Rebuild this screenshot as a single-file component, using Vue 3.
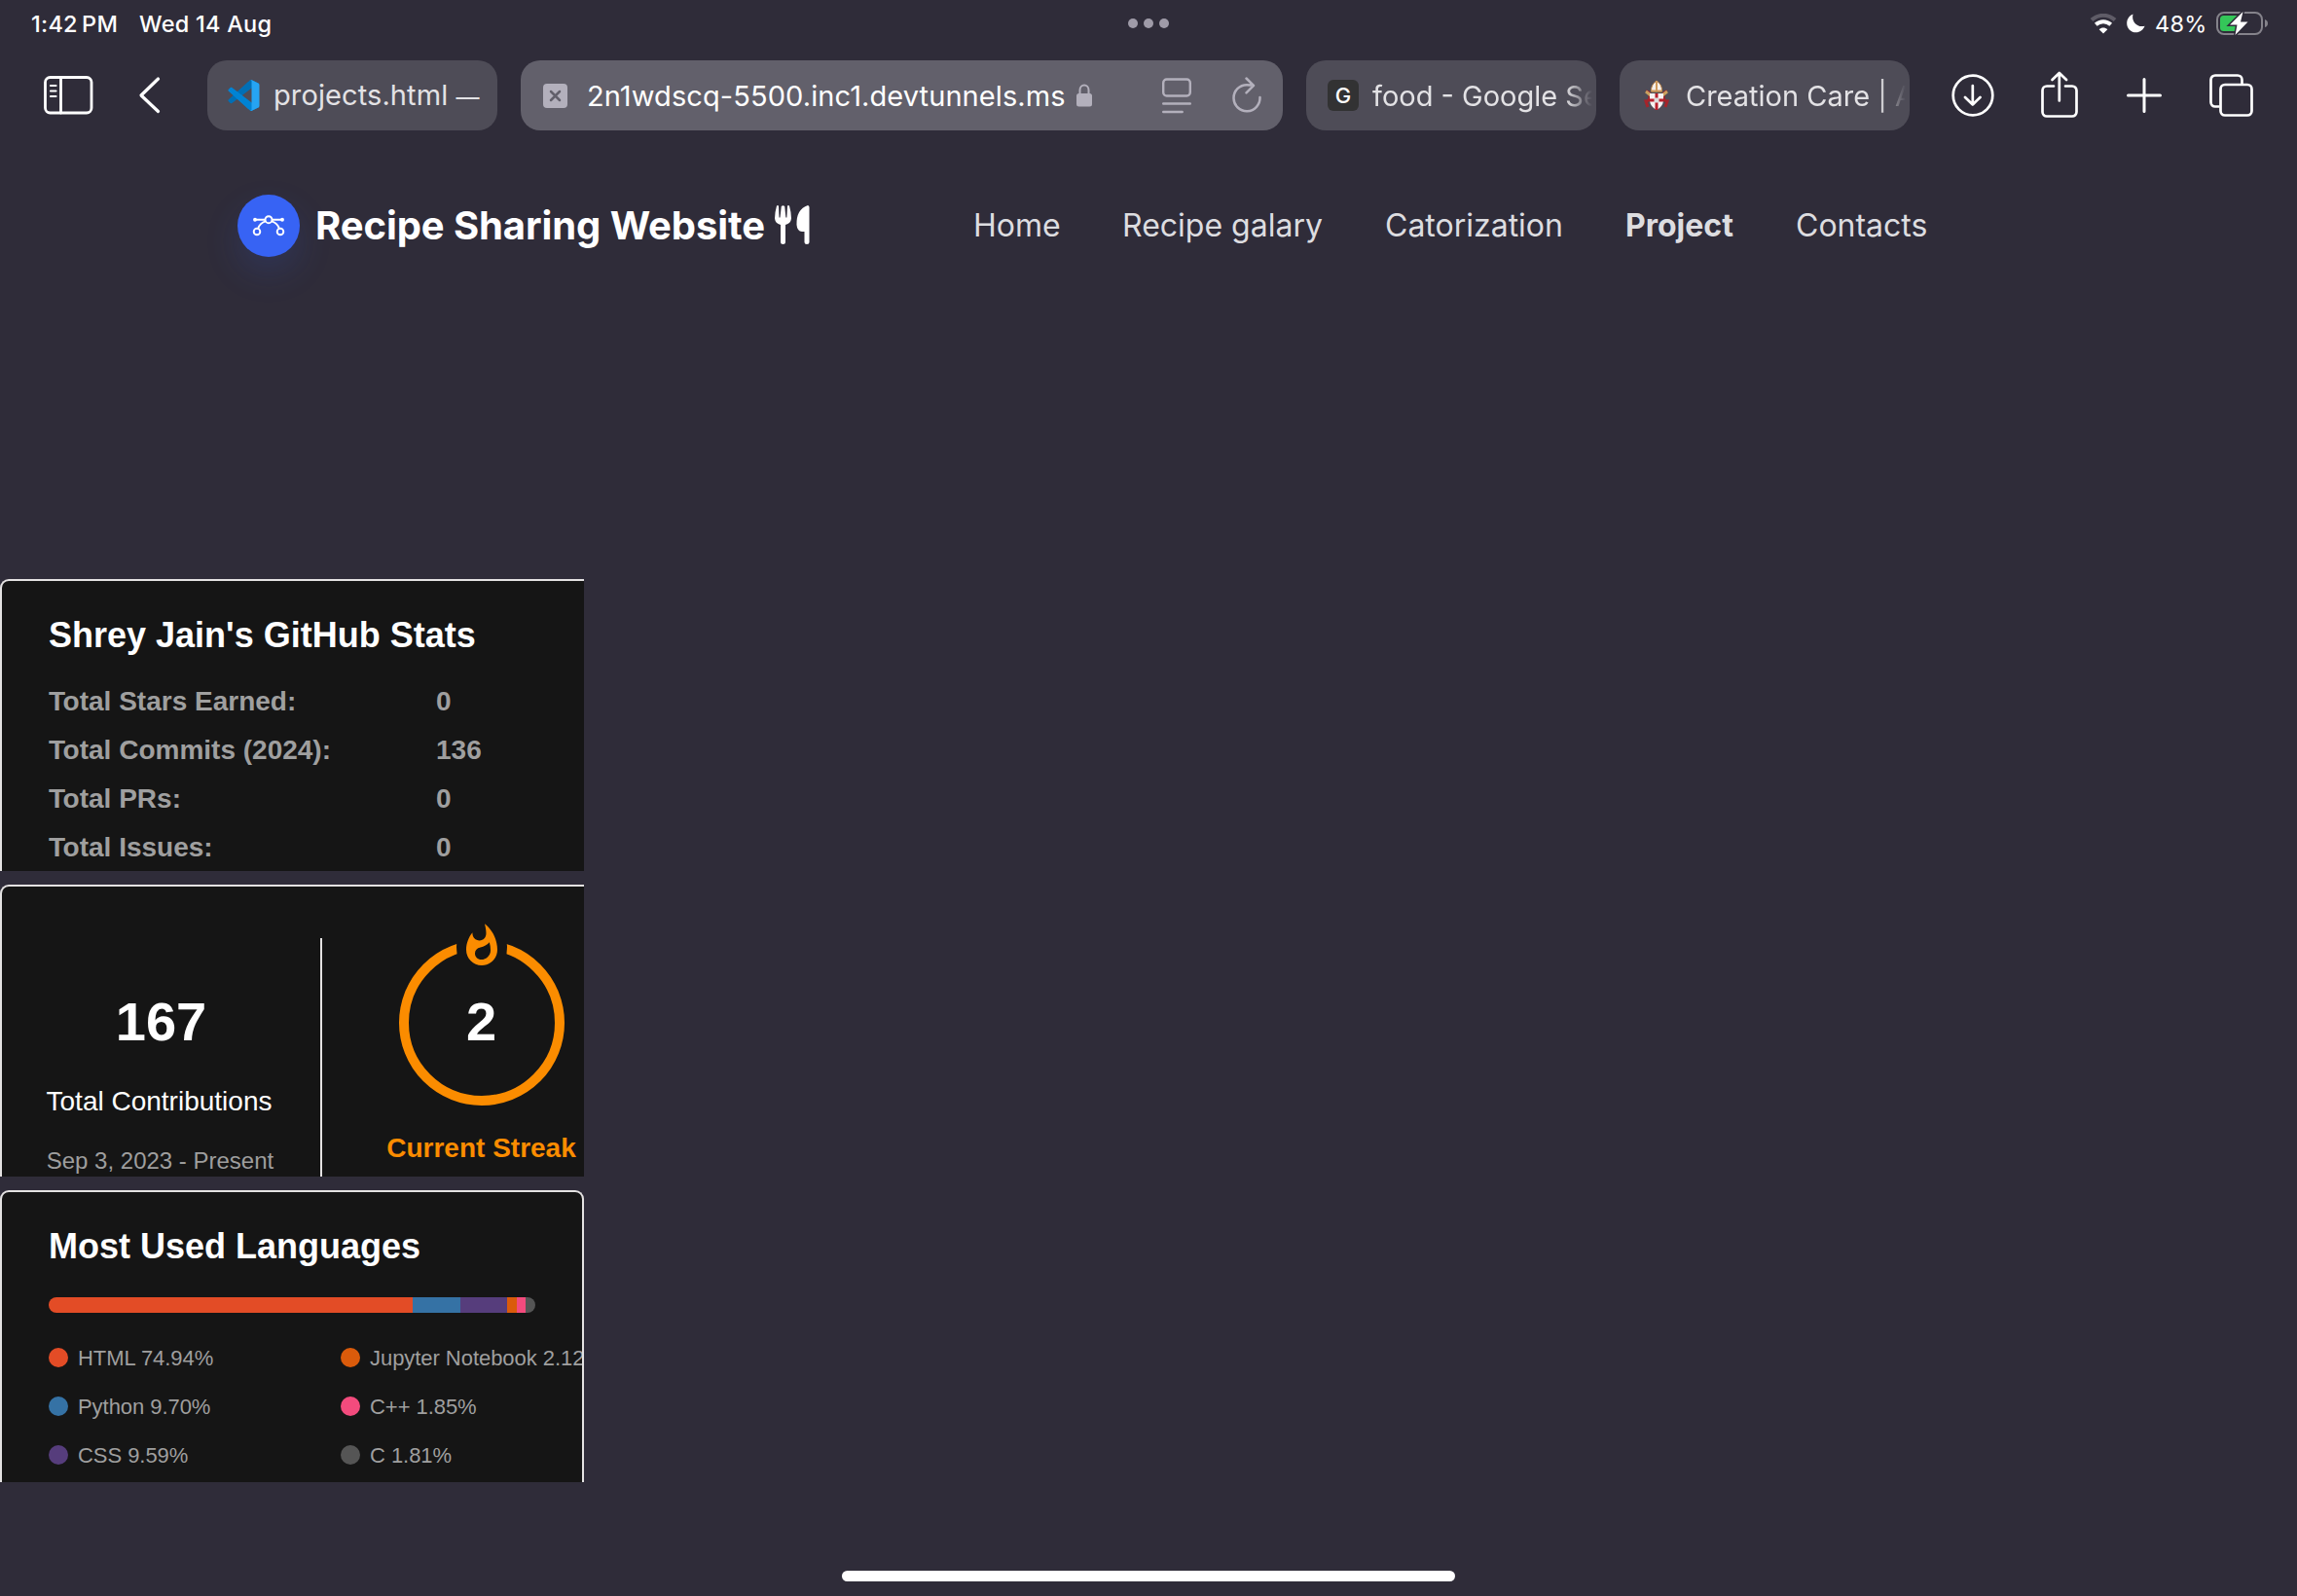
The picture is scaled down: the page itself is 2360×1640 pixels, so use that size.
<script setup>
const nav = [
  { label: 'Home', cls: 'n1' },
  { label: 'Recipe galary', cls: 'n2' },
  { label: 'Catorization', cls: 'n3' },
  { label: 'Project', cls: 'n4 active' },
  { label: 'Contacts', cls: 'n5' },
]
const stats = [
  ['Total Stars Earned:', '0'],
  ['Total Commits (2024):', '136'],
  ['Total PRs:', '0'],
  ['Total Issues:', '0'],
]
const segments = [
  { color: '#e34c26', size: 374.2 },
  { color: '#3572a5', size: 48.5 },
  { color: '#563d7c', size: 48 },
  { color: '#da5b0b', size: 10.6 },
  { color: '#f34b7d', size: 9.2 },
  { color: '#555555', size: 9.5 },
]
const languages = [
  ['HTML 74.94%', '#e34c26'],
  ['Jupyter Notebook 2.12%', '#da5b0b'],
  ['Python 9.70%', '#3572a5'],
  ['C++ 1.85%', '#f34b7d'],
  ['CSS 9.59%', '#563d7c'],
  ['C 1.81%', '#555555'],
]
</script>

<template>
  <div class="screen">
    <div class="status">
      <span class="time">1:42&#8201;PM</span>
      <span class="date">Wed 14 Aug</span>
      <span class="dots"><i></i><i></i><i></i></span>
      <span class="right">
        <svg class="wifi" width="28" height="21" viewBox="0 0 28 21" fill="none">
          <path d="M2 6.6C9 .2 19 .2 26 6.6" stroke="#5f5c67" stroke-width="4" />
          <path d="M6.3 11.3c4.5-4.1 10.900-4.1 15.400 0" stroke="#fff" stroke-width="4" />
          <path d="M14 20.500l-4.300-4.300c2.400-2.200 6.200-2.200 8.600 0z" fill="#fff" />
        </svg>
        <svg class="moon" width="19" height="20" viewBox="0 0 19 20">
          <path d="M6.500.4C4.600 7.500 10 14.600 18.600 12.800 16.800 17 13.600 19.300 9.700 19.300 4.400 19.300.2 15.200.2 9.900.2 5.500 2.700 1.900 6.500.4z" fill="#fff" />
        </svg>
        <span class="pct">48%</span>
        <svg class="battery" width="54" height="26" viewBox="0 0 54 26">
          <rect x="1" y="2" width="46" height="22" rx="7" fill="none" stroke="#85838b" stroke-width="2" />
          <path d="M50 9q3 1 3 4t-3 4z" fill="#85838b" />
          <path d="M7.500 5H22v16H7.500a3.500 3.500 0 0 1-3.500-3.500v-9A3.500 3.500 0 0 1 7.500 5z" fill="#34c759" />
          <path d="M27.500 1L14 14.500h7.500L19.500 25 32.500 11.500H25z" fill="#fff" stroke="#2f2c39" stroke-width="3" paint-order="stroke" />
        </svg>
      </span>
    </div>

    <div class="toolbar">
      <svg class="side" width="51" height="40" viewBox="0 0 51 40" fill="none" stroke="#fff" stroke-linecap="round">
        <rect x="1.500" y="1.500" width="47.500" height="36.500" rx="5" stroke-width="2.800" />
        <path d="M17.500 1.500V38" stroke-width="2.800" />
        <path d="M7 10h5.500M7 15.500h5.500M7 21h5.500" stroke-width="2.200" />
      </svg>
      <svg class="back" width="24" height="40" viewBox="0 0 24 40" fill="none">
        <path d="M20.500 3L3 20 20.500 36.500" stroke="#fff" stroke-width="3.200" stroke-linecap="round" stroke-linejoin="round" />
      </svg>
      <div class="tab small">
        <svg class="fav" width="33" height="32" viewBox="0 0 100 100">
          <path d="M96.500 10.700L75.900.8a6.200 6.200 0 0 0-7.100 1.200L1.300 63.500a4.200 4.200 0 0 0 0 6.200l5.500 5c1.500 1.300 3.700 1.400 5.300.2L93.400 13.200c2.700-2 6.600-.1 6.600 3.300v-.2c0-2.400-1.400-4.600-3.500-5.600z" fill="#006fb5" />
          <path d="M96.500 89.300l-20.600 9.900a6.200 6.200 0 0 1-7.100-1.200L1.300 36.500a4.200 4.200 0 0 1 0-6.200l5.500-5c1.500-1.300 3.700-1.400 5.300-.2l81.300 61.700c2.700 2 6.600.1 6.600-3.300v.2c0 2.400-1.400 4.600-3.500 5.600z" fill="#0083d4" />
          <path d="M75.900 99.200a6.200 6.200 0 0 1-7.100-1.200c2.300 2.300 6.200.7 6.200-2.600V4.600c0-3.300-3.900-4.900-6.200-2.600A6.200 6.200 0 0 1 75.900.8l20.600 9.900a6.200 6.200 0 0 1 3.500 5.600v67.400c0 2.400-1.400 4.600-3.500 5.600z" fill="#26a4f3" />
        </svg>
        <span class="label l1">projects.html <span class="dash">—</span></span>
      </div>
      <div class="tab active">
        <svg class="close" width="25" height="25" viewBox="0 0 25 25">
          <rect width="25" height="25" rx="4" fill="#b3b0bc" />
          <path d="M8 8l9 9M17 8l-9 9" stroke="#62606b" stroke-width="2.500" stroke-linecap="round" />
        </svg>
        <span class="label url">2n1wdscq-5500.inc1.devtunnels.ms</span>
        <svg class="lock" width="16" height="24" viewBox="0 0 16 24">
          <path d="M3.500 12V6.500a4.500 5 0 0 1 9 0V12" fill="none" stroke="#b3b0bc" stroke-width="2" />
          <rect x="0" y="10" width="16" height="13.500" rx="2.500" fill="#b3b0bc" />
        </svg>
        <svg class="reader" width="30" height="37" viewBox="0 0 30 37" fill="none" stroke="#b3b0bc" stroke-width="2.400" stroke-linecap="round">
          <rect x="1.200" y="1.500" width="27.600" height="17" rx="3.500" />
          <path d="M1.200 26.500h27.600M1.200 35h19.500" />
        </svg>
        <svg class="reload" width="31" height="37" viewBox="0 0 31 37" fill="none" stroke="#b3b0bc" stroke-width="2.500" stroke-linecap="round" stroke-linejoin="round">
          <path d="M28.500 21A13.500 13.500 0 1 1 15 8.200q3.500 0 6.500.6M14.500 1.500l7.500 7.300-7.500 7.500" />
        </svg>
      </div>
      <div class="tab small">
        <span class="g">G</span>
        <span class="label l3">food - Google Search</span>
      </div>
      <div class="tab small">
        <svg class="crest" width="26" height="32" viewBox="0 0 26 32">
          <path d="M2 12q4 0 4 5t-4 5l2 6M24 12q-4 0-4 5t4 5l-2 6" fill="none" stroke="#a5242b" stroke-width="3" />
          <path d="M2 12l5 4M24 12l-5 4" stroke="#c9a05e" stroke-width="3" />
          <path d="M13 1q-6 4-5.500 11h11Q19 5 13 1z" fill="#f4eee8" stroke="#b98347" stroke-width="1" />
          <path d="M13 1v11M7.500 11.500h11" stroke="#cf9a5c" stroke-width="2" />
          <path d="M6 14h14v8q-1 6-7 9-6-3-7-9z" fill="#f7f3f2" />
          <path d="M13 14v17M6 21h14" stroke="#b9202c" stroke-width="3" />
          <path d="M10.500 18.500h5v5h-5z" fill="#ddd" />
        </svg>
        <span class="label l4">Creation Care | Anglican</span>
      </div>
      <svg class="act a1" width="44" height="44" viewBox="0 0 44 44" fill="none" stroke="#fff" stroke-width="2.700" stroke-linecap="round" stroke-linejoin="round">
        <circle cx="22" cy="22" r="20.300" />
        <path d="M21.800 12v19.500M14 24l7.800 7.500L29.500 24" />
      </svg>
      <svg class="act a2" width="38" height="48" viewBox="0 0 38 48" fill="none" stroke="#fff" stroke-width="2.700" stroke-linecap="round" stroke-linejoin="round">
        <path d="M13 15.500H6A4.500 4.500 0 0 0 1.500 20v22A4.500 4.500 0 0 0 6 46.500h26a4.500 4.500 0 0 0 4.500-4.500V20a4.500 4.500 0 0 0-4.500-4.500h-7" />
        <path d="M18.800 30.500V2M11.500 9l7.300-7 7.300 7" />
      </svg>
      <svg class="act a3" width="36" height="36" viewBox="0 0 36 36" stroke="#fff" stroke-width="3" stroke-linecap="round">
        <path d="M18 1.500v33M1.500 18h33" />
      </svg>
      <svg class="act a4" width="45" height="44" viewBox="0 0 45 44" fill="none" stroke="#fff" stroke-width="2.700">
        <path d="M33.500 10V6A4.500 4.500 0 0 0 29 1.500H6A4.500 4.500 0 0 0 1.500 6v23A4.500 4.500 0 0 0 6 33.500h4.500" />
        <rect x="11.500" y="11" width="32" height="31.500" rx="4.500" />
      </svg>
    </div>

    <header>
      <span class="logo">
        <svg width="34" height="28" viewBox="0 0 34 28" fill="none" stroke="#fff" stroke-width="1.900">
          <path d="M3 7.700h10.500M20.500 7.700H31M13.800 9.300Q8 11 6.300 16.500M20.200 9.300Q26 11 27.700 16.500" />
          <circle cx="17" cy="7.700" r="3.500" />
          <circle cx="5" cy="20" r="3.300" /><circle cx="29" cy="20" r="3.300" />
          <circle cx="3" cy="7.700" r="1" fill="#fff" /><circle cx="31" cy="7.700" r="1" fill="#fff" />
        </svg>
      </span>
      <h1>Recipe Sharing Website</h1>
      <svg class="fork" width="36" height="42" viewBox="0 0 36 42" fill="#fff">
        <path d="M2 1.500Q3.500.5 4 2l.5 11.500h1L6.800 2q1.700-1.700 3.400 0l1.200 11.500h1L13 2q.5-1.500 2-.5 2 7 2 13-.5 5-6 6.500V39q0 2-2.500 2T6 39V21Q.5 19.500 0 14.500 0 8.500 2 1.500z" />
        <path d="M34 1q1.500.3 1.500 2v36q0 2-2.500 2t-2.500-2V28h-2.500q-5-.5-5.500-7Q22 5 34 1z" />
      </svg>
      <nav>
        <a v-for="n in nav" :key="n.label" :class="n.cls">{{ n.label }}</a>
      </nav>
    </header>

    <main>
      <section class="card">
        <h2>Shrey Jain's GitHub Stats</h2>
        <dl>
          <div v-for="s in stats" :key="s[0]"><dt>{{ s[0] }}</dt><dd>{{ s[1] }}</dd></div>
        </dl>
      </section>

      <section class="card streak">
        <div class="total">
          <b>167</b>
          <span class="tc">Total Contributions</span>
          <span class="since">Sep 3, 2023 - Present</span>
        </div>
        <div class="current">
          <svg width="180" height="204" viewBox="202.500 14 90 102">
            <mask id="gap" maskUnits="userSpaceOnUse" x="190" y="0" width="120" height="130">
              <rect x="190" y="0" width="120" height="130" fill="#fff" />
              <ellipse cx="247.500" cy="32" rx="13" ry="18" fill="#000" />
            </mask>
            <circle cx="247.500" cy="71" r="40" fill="none" stroke="#fb8c00" stroke-width="5" mask="url(#gap)" />
            <path transform="translate(247.500 19.500)" fill="#fb8c00" fill-rule="evenodd" d="M1.500.67C1.500.67 2.240 3.320 2.240 5.470 2.240 7.530.89 9.200-1.170 9.200-3.230 9.200-4.790 7.530-4.790 5.470L-4.760 5.110C-6.780 7.510-8 10.620-8 13.990-8 18.410-4.440 22 0 22 4.440 22 8 18.410 8 13.990 8 8.600 5.410 3.790 1.500.67ZM-.29 19C-2.070 19-3.510 17.600-3.510 15.860-3.510 14.240-2.460 13.100-.7 12.740 1.070 12.380 2.900 11.530 3.920 10.160 4.310 11.450 4.510 12.810 4.510 14.200 4.510 16.850 2.360 19-.29 19Z" />
          </svg>
          <b>2</b>
          <span>Current Streak</span>
        </div>
      </section>

      <section class="card langs">
        <h2>Most Used Languages</h2>
        <div class="bar">
          <i v-for="s in segments" :key="s.color" :style="{ width: s.size + 'px', background: s.color }"></i>
        </div>
        <ul>
          <li v-for="l in languages" :key="l[0]"><i :style="{ background: l[1] }"></i><span>{{ l[0] }}</span></li>
        </ul>
      </section>
    </main>

    <div class="home"></div>
  </div>
</template>

<style>
body { background: #2f2c39; }
</style>

<style scoped>
.screen {
  width: 2360px;
  height: 1640px;
  overflow: hidden;
  background: #2f2c39;
  color: #fff;
  font-family: Inter, sans-serif;
  display: flex;
  flex-direction: column;
  white-space: nowrap;
}
.screen * { box-sizing: border-box; flex-shrink: 0; }
svg { display: block; }

.status { height: 48px; display: flex; align-items: center; padding-left: 32px; font-size: 23.500px; font-weight: 450; letter-spacing: .25px; }
.time { width: 111px; }
.date { width: 1016px; }
.dots { display: flex; gap: 6px; }
.dots i { width: 10px; height: 10px; border-radius: 50%; background: #9f9ba8; }
.right { display: flex; align-items: center; margin-left: 946px; }
.moon { margin-left: 10px; }
.pct { margin-left: 10px; width: 63px; font-weight: 400; }

.toolbar { height: 100px; display: flex; align-items: center; padding: 0 0 0 45px; }
.back { margin-left: 46px; margin-right: 47px; }
.tab { height: 72px; border-radius: 20px; background: #4e4c57; display: flex; align-items: center; margin-right: 24px; overflow: hidden; }
.small { width: 298px; color: #e3e2e5; }
.small .label { width: 226px; overflow: hidden; }
.active.tab { width: 783px; background: #62606b; }
.fav { margin-left: 21px; }
.label { font-size: 29px; line-height: 40px; padding-top: 1px; }
.l1 { margin-left: 14px; letter-spacing: .1px; }
.dash { font-size: 24px; }
.l3, .l4 { -webkit-mask-image: linear-gradient(90deg, #000 198px, transparent 226px); mask-image: linear-gradient(90deg, #000 198px, transparent 226px); }
.close { margin-left: 23px; }
.url { margin-left: 20px; width: 492px; letter-spacing: .09px; }
.lock { margin-left: 11px; }
.reader { margin-left: 72px; }
.reload { margin-left: 42px; margin-top: -2px; }
.g { width: 32px; height: 32px; border-radius: 6px; background: #323233; color: #fff; font-size: 22px; font-weight: 500; line-height: 32px; text-align: center; margin-left: 22px; }
.l3 { margin-left: 14px; }
.crest { margin-left: 25px; }
.l4 { margin-left: 17px; }
.a1 { margin-left: 19px; }
.a2 { margin-left: 48px; margin-top: -2px; }
.a3 { margin-left: 50px; }
.a4 { margin-left: 49px; }

header { height: 168px; display: flex; align-items: center; padding-left: 244px; }
.logo { width: 64px; height: 64px; border-radius: 50%; background: #3763f4; box-shadow: 0 16px 36px rgba(55, 99, 244, .16); display: flex; align-items: center; justify-content: center; }
h1 { margin: 0 0 0 16px; width: 472px; font-size: 40px; font-weight: 700; line-height: 48px; letter-spacing: -.08px; }
.fork { margin-top: -2px; }
nav { display: flex; margin-left: 168px; font-size: 32px; line-height: 40px; color: #dddde0; }
nav a.active { font-weight: 700; }
.n1 { width: 153px; } .n2 { width: 270px; } .n3 { width: 247px; } .n4 { width: 175px; }

main { margin-top: 279px; display: flex; flex-direction: column; gap: 14px; font-family: "Liberation Sans", Arial, sans-serif; }
.card { width: 600px; height: 300px; background: #151515; border: 2px solid #e4e2e2; border-width: 2px 0 0 2px; border-radius: 9px 0 0 0; overflow: hidden; }
h2 { margin: 34px 0 0 48px; font-size: 36px; line-height: 44px; font-weight: 700; }
dl { margin: 21px 0 0 48px; font-size: 28px; font-weight: 700; color: #9f9f9f; }
dl div { display: flex; height: 50px; line-height: 50px; }
dt { width: 398px; }
dt::first-letter { letter-spacing: -2.500px; }
dd { margin: 0; }

.streak { display: flex; }
.total { width: 329px; height: 245px; margin-top: 53px; border-right: 2px solid #e4e2e2; display: flex; flex-direction: column; align-items: center; }
.streak b { font-size: 56px; line-height: 64px; }
.total b { margin-top: 54px; }
.tc { font-size: 28px; line-height: 32px; margin: 34px 4px 0 0; }
.since { font-size: 24px; line-height: 28px; margin: 31px 2px 0 0; color: #9e9e9e; }
.current { width: 327px; display: flex; flex-direction: column; align-items: center; position: relative; }
.current svg { margin-top: 26px; }
.current b { position: absolute; top: 107px; }
.current span { color: #fb8c00; font-size: 28px; font-weight: 700; line-height: 32px; margin-top: 23px; }

.langs { border-width: 2px 2px 0 2px; border-radius: 9px 9px 0 0; }
.bar { display: flex; width: 500px; height: 16px; margin: 30px 0 0 48px; border-radius: 9px; overflow: hidden; }
ul { list-style: none; margin: 21px 0 0 48px; padding: 0; display: grid; grid-template-columns: 300px 300px; color: #9f9f9f; font-size: 22px; }
li { height: 50px; display: flex; align-items: center; gap: 10px; }
li span { padding-top: 2px; letter-spacing: -.05px; }
li i { width: 20px; height: 20px; border-radius: 50%; }

.home { width: 630px; height: 11px; border-radius: 6px; background: #fff; margin: 91px auto 0; }
</style>
